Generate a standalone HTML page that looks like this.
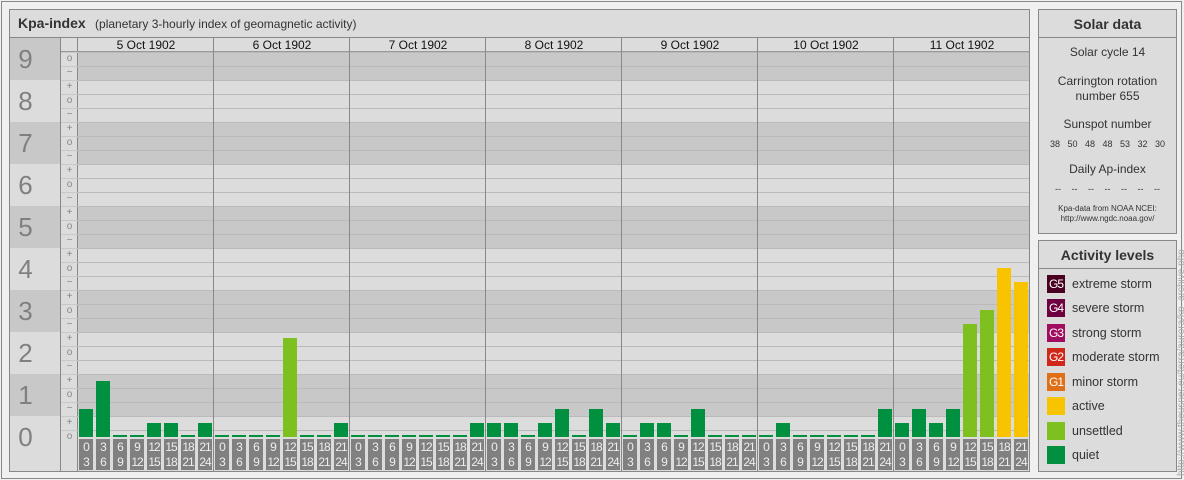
<!DOCTYPE html>
<html><head><meta charset="utf-8"><style>
*{margin:0;padding:0;box-sizing:border-box}
body{width:1184px;height:480px;background:#f0f0f0;font-family:"Liberation Sans",sans-serif;position:relative;overflow:hidden}
.a{position:absolute}
#frame{left:1px;top:1px;width:1181px;height:478px;border:1px solid #888}
#main{left:9px;top:9px;width:1021px;height:463px;border:1px solid #888;background:#dcdcdc}
#title{left:10px;top:10px;width:1019px;height:28px;border-bottom:1px solid #888;font-size:12px;color:#333;line-height:27px;padding-left:8px}
#title b{font-size:14px;color:#333;margin-right:6px}
#num{left:10px;top:38px;width:51px;height:433px;background:repeating-linear-gradient(to bottom,#c8c8c8 0 42px,#dcdcdc 42px 84px);border-right:1px solid #888}
.n{position:absolute;left:0;width:51px;text-align:center;font-size:26px;color:#808080;line-height:30px}
#sgn{left:61px;top:38px;width:17px;height:433px;border-right:1px solid #888;background:#dcdcdc}
.s{position:absolute;left:61px;width:17px;text-align:center;font-size:10px;color:#888;line-height:10px}
#plot{left:78px;top:52px;width:951px;height:385px;background:repeating-linear-gradient(to bottom,#c8c8c8 0 28px,#dcdcdc 28px 70px,#c8c8c8 70px 84px)}
#grid{left:78px;top:52px;width:951px;height:385px;background:repeating-linear-gradient(to bottom,#bababa 0 1px,transparent 1px 14px)}
#sgrid{left:61px;top:52px;width:17px;height:385px;background:repeating-linear-gradient(to bottom,#c8c8c8 0 1px,transparent 1px 14px)}
#hdr{left:61px;top:38px;width:968px;height:14px;border-bottom:1px solid #999}
.d{position:absolute;top:38px;width:136px;text-align:center;font-size:12px;line-height:14px;color:#111}
.v{position:absolute;top:38px;width:1px;height:433px;background:#888}
.b{position:absolute;width:14px;bottom:43px}
.q{background:#009040}.u{background:#7dc020}.ac{background:#f8c400}
.t{position:absolute;top:439px;width:14px;height:31px;background:#808080;color:#eee;font-size:12px;line-height:15px;text-align:center;letter-spacing:-1px;padding-top:1px}
.p{border:1px solid #888;background:#dcdcdc}
.ph{position:absolute;left:0;top:0;width:100%;height:28px;border-bottom:1px solid #888;font-weight:bold;font-size:14px;color:#333;text-align:center;line-height:28px}
.c{position:absolute;left:0;width:100%;text-align:center;font-size:12px;color:#333;line-height:15px}
.sq{position:absolute;left:8px;width:18px;height:18px;color:#fff;font-size:12px;line-height:18px;text-align:center;letter-spacing:-1px}
.lt{position:absolute;left:33px;font-size:12.5px;color:#333;line-height:18px}
</style></head><body>
<div class="a" id="frame"></div>
<div class="a" id="main"></div>
<div class="a" id="title"><b>Kpa-index</b> (planetary 3-hourly index of geomagnetic activity)</div>
<div class="a" id="num"></div>
<div class="a" style="left:10px;top:458px;width:50px;height:13px;background:#dcdcdc"></div>
<div class="a" id="sgn"></div>
<div class="a" id="plot"></div>
<div class="a" id="grid"></div>
<div class="a" id="sgrid"></div>
<div class="a" id="hdr"></div>
<div class="n" style="top:44px">9</div><div class="n" style="top:86px">8</div><div class="n" style="top:128px">7</div><div class="n" style="top:170px">6</div><div class="n" style="top:212px">5</div><div class="n" style="top:254px">4</div><div class="n" style="top:296px">3</div><div class="n" style="top:338px">2</div><div class="n" style="top:380px">1</div><div class="n" style="top:422px">0</div>
<div class="s" style="top:54px">o</div><div class="s" style="top:68px">−</div>
<div class="s" style="top:82px">+</div><div class="s" style="top:96px">o</div><div class="s" style="top:110px">−</div>
<div class="s" style="top:124px">+</div><div class="s" style="top:138px">o</div><div class="s" style="top:152px">−</div>
<div class="s" style="top:166px">+</div><div class="s" style="top:180px">o</div><div class="s" style="top:194px">−</div>
<div class="s" style="top:208px">+</div><div class="s" style="top:222px">o</div><div class="s" style="top:236px">−</div>
<div class="s" style="top:250px">+</div><div class="s" style="top:264px">o</div><div class="s" style="top:278px">−</div>
<div class="s" style="top:292px">+</div><div class="s" style="top:306px">o</div><div class="s" style="top:320px">−</div>
<div class="s" style="top:334px">+</div><div class="s" style="top:348px">o</div><div class="s" style="top:362px">−</div>
<div class="s" style="top:376px">+</div><div class="s" style="top:390px">o</div><div class="s" style="top:404px">−</div>
<div class="s" style="top:418px">+</div><div class="s" style="top:432px">o</div>
<div class="d" style="left:78px">5 Oct 1902</div><div class="d" style="left:214px">6 Oct 1902</div><div class="d" style="left:350px">7 Oct 1902</div><div class="d" style="left:486px">8 Oct 1902</div><div class="d" style="left:622px">9 Oct 1902</div><div class="d" style="left:758px">10 Oct 1902</div><div class="d" style="left:894px">11 Oct 1902</div>
<div class="v" style="left:213px"></div><div class="v" style="left:349px"></div><div class="v" style="left:485px"></div><div class="v" style="left:621px"></div><div class="v" style="left:757px"></div><div class="v" style="left:893px"></div>
<div class="b q" style="left:79px;height:28px"></div><div class="b q" style="left:96px;height:56px"></div><div class="b q" style="left:113px;height:2px"></div><div class="b q" style="left:130px;height:2px"></div><div class="b q" style="left:147px;height:14px"></div><div class="b q" style="left:164px;height:14px"></div><div class="b q" style="left:181px;height:2px"></div><div class="b q" style="left:198px;height:14px"></div>
<div class="b q" style="left:215px;height:2px"></div><div class="b q" style="left:232px;height:2px"></div><div class="b q" style="left:249px;height:2px"></div><div class="b q" style="left:266px;height:2px"></div><div class="b u" style="left:283px;height:99px"></div><div class="b q" style="left:300px;height:2px"></div><div class="b q" style="left:317px;height:2px"></div><div class="b q" style="left:334px;height:14px"></div>
<div class="b q" style="left:351px;height:2px"></div><div class="b q" style="left:368px;height:2px"></div><div class="b q" style="left:385px;height:2px"></div><div class="b q" style="left:402px;height:2px"></div><div class="b q" style="left:419px;height:2px"></div><div class="b q" style="left:436px;height:2px"></div><div class="b q" style="left:453px;height:2px"></div><div class="b q" style="left:470px;height:14px"></div>
<div class="b q" style="left:487px;height:14px"></div><div class="b q" style="left:504px;height:14px"></div><div class="b q" style="left:521px;height:2px"></div><div class="b q" style="left:538px;height:14px"></div><div class="b q" style="left:555px;height:28px"></div><div class="b q" style="left:572px;height:2px"></div><div class="b q" style="left:589px;height:28px"></div><div class="b q" style="left:606px;height:14px"></div>
<div class="b q" style="left:623px;height:2px"></div><div class="b q" style="left:640px;height:14px"></div><div class="b q" style="left:657px;height:14px"></div><div class="b q" style="left:674px;height:2px"></div><div class="b q" style="left:691px;height:28px"></div><div class="b q" style="left:708px;height:2px"></div><div class="b q" style="left:725px;height:2px"></div><div class="b q" style="left:742px;height:2px"></div>
<div class="b q" style="left:759px;height:2px"></div><div class="b q" style="left:776px;height:14px"></div><div class="b q" style="left:793px;height:2px"></div><div class="b q" style="left:810px;height:2px"></div><div class="b q" style="left:827px;height:2px"></div><div class="b q" style="left:844px;height:2px"></div><div class="b q" style="left:861px;height:2px"></div><div class="b q" style="left:878px;height:28px"></div>
<div class="b q" style="left:895px;height:14px"></div><div class="b q" style="left:912px;height:28px"></div><div class="b q" style="left:929px;height:14px"></div><div class="b q" style="left:946px;height:28px"></div><div class="b u" style="left:963px;height:113px"></div><div class="b u" style="left:980px;height:127px"></div><div class="b ac" style="left:997px;height:169px"></div><div class="b ac" style="left:1014px;height:155px"></div>
<div class="t" style="left:79px">0<br>3</div><div class="t" style="left:96px">3<br>6</div><div class="t" style="left:113px">6<br>9</div><div class="t" style="left:130px">9<br>12</div><div class="t" style="left:147px">12<br>15</div><div class="t" style="left:164px">15<br>18</div><div class="t" style="left:181px">18<br>21</div><div class="t" style="left:198px">21<br>24</div>
<div class="t" style="left:215px">0<br>3</div><div class="t" style="left:232px">3<br>6</div><div class="t" style="left:249px">6<br>9</div><div class="t" style="left:266px">9<br>12</div><div class="t" style="left:283px">12<br>15</div><div class="t" style="left:300px">15<br>18</div><div class="t" style="left:317px">18<br>21</div><div class="t" style="left:334px">21<br>24</div>
<div class="t" style="left:351px">0<br>3</div><div class="t" style="left:368px">3<br>6</div><div class="t" style="left:385px">6<br>9</div><div class="t" style="left:402px">9<br>12</div><div class="t" style="left:419px">12<br>15</div><div class="t" style="left:436px">15<br>18</div><div class="t" style="left:453px">18<br>21</div><div class="t" style="left:470px">21<br>24</div>
<div class="t" style="left:487px">0<br>3</div><div class="t" style="left:504px">3<br>6</div><div class="t" style="left:521px">6<br>9</div><div class="t" style="left:538px">9<br>12</div><div class="t" style="left:555px">12<br>15</div><div class="t" style="left:572px">15<br>18</div><div class="t" style="left:589px">18<br>21</div><div class="t" style="left:606px">21<br>24</div>
<div class="t" style="left:623px">0<br>3</div><div class="t" style="left:640px">3<br>6</div><div class="t" style="left:657px">6<br>9</div><div class="t" style="left:674px">9<br>12</div><div class="t" style="left:691px">12<br>15</div><div class="t" style="left:708px">15<br>18</div><div class="t" style="left:725px">18<br>21</div><div class="t" style="left:742px">21<br>24</div>
<div class="t" style="left:759px">0<br>3</div><div class="t" style="left:776px">3<br>6</div><div class="t" style="left:793px">6<br>9</div><div class="t" style="left:810px">9<br>12</div><div class="t" style="left:827px">12<br>15</div><div class="t" style="left:844px">15<br>18</div><div class="t" style="left:861px">18<br>21</div><div class="t" style="left:878px">21<br>24</div>
<div class="t" style="left:895px">0<br>3</div><div class="t" style="left:912px">3<br>6</div><div class="t" style="left:929px">6<br>9</div><div class="t" style="left:946px">9<br>12</div><div class="t" style="left:963px">12<br>15</div><div class="t" style="left:980px">15<br>18</div><div class="t" style="left:997px">18<br>21</div><div class="t" style="left:1014px">21<br>24</div>
<div class="a p" style="left:1038px;top:9px;width:139px;height:225px">
<div class="ph">Solar data</div>
<div class="c" style="top:35px">Solar cycle 14</div>
<div class="c" style="top:64px">Carrington rotation<br>number 655</div>
<div class="c" style="top:107px">Sunspot number</div>
<div class="c" style="top:127px;font-size:9px;word-spacing:5px">38 50 48 48 53 32 30</div>
<div class="c" style="top:152px">Daily Ap-index</div>
<div class="c" style="top:172px;font-size:9px;word-spacing:8px">-- -- -- -- -- -- --</div>
<div class="c" style="top:194px;font-size:8px;line-height:10px">Kpa-data from NOAA NCEI:<br>http://www.ngdc.noaa.gov/</div>
</div>
<div class="a p" style="left:1038px;top:240px;width:139px;height:232px">
<div class="ph">Activity levels</div>
<div class="sq" style="top:34px;background:#4a0020">G5</div><div class="lt" style="top:34px">extreme storm</div>
<div class="sq" style="top:58px;background:#6e0040">G4</div><div class="lt" style="top:58px">severe storm</div>
<div class="sq" style="top:83px;background:#a00d60">G3</div><div class="lt" style="top:83px">strong storm</div>
<div class="sq" style="top:107px;background:#d02818">G2</div><div class="lt" style="top:107px">moderate storm</div>
<div class="sq" style="top:132px;background:#e07018">G1</div><div class="lt" style="top:132px">minor storm</div>
<div class="sq" style="top:156px;background:#f8c400"></div><div class="lt" style="top:156px">active</div>
<div class="sq" style="top:181px;background:#7dc020"></div><div class="lt" style="top:181px">unsettled</div>
<div class="sq" style="top:205px;background:#009040"></div><div class="lt" style="top:205px">quiet</div>
</div>
<div class="a" style="left:1177px;top:476px;transform-origin:0 0;transform:rotate(-90deg);font-size:10px;color:#aaa;white-space:nowrap;line-height:9px">http://www.theusner.eu/terra/aurora/kp_archive.php</div>
</body></html>
